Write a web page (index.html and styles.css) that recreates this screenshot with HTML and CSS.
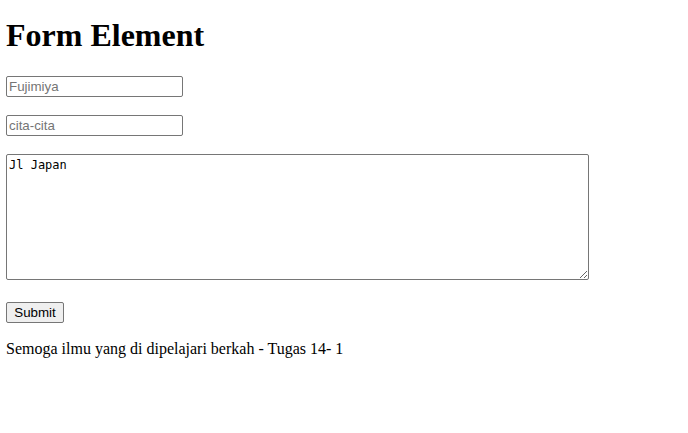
FILE: index.html
```html
<!DOCTYPE html>
<html>
<head>
<meta charset="utf-8">
<link rel="stylesheet" href="styles.css">
</head>
<body>
<h1 class="title">Form Element</h1>
<form class="form">
  <input class="field" type="text" placeholder="Fujimiya">
  <input class="field" type="text" placeholder="cita-cita">
  <textarea class="area">Jl Japan</textarea>
  <button class="submit" type="button">Submit</button>
</form>
<p class="note">Semoga ilmu yang di dipelajari berkah - Tugas 14- 1</p>
</body>
</html>
```
FILE: styles.css
```css
html, body {
  background: #fff;
}
body {
  margin: 0 6px;
  font-family: "Liberation Serif", "Times New Roman", serif;
  color: #000;
}
.title {
  margin: 17px 0 0;
  font-size: 32px;
  font-weight: bold;
  line-height: 37px;
  height: 37px;
}
.form {
  display: flex;
  flex-direction: column;
  align-items: flex-start;
  margin-top: 22px;
}
.field {
  box-sizing: border-box;
  width: 177px;
  height: 21px;
  margin: 0 0 18px;
  padding: 1px 2px;
  border: 1px solid #767676;
  border-radius: 2px;
  font-family: "Liberation Sans", Arial, sans-serif;
  font-size: 13.33px;
  color: #000;
  background: #fff;
}
.field::placeholder {
  color: #757575;
}
.area {
  box-sizing: border-box;
  width: 583px;
  height: 126px;
  margin: 0 0 22px;
  padding: 3px 2px 2px;
  border: 1px solid #767676;
  border-radius: 2px;
  font-family: "DejaVu Sans Mono", "Liberation Mono", monospace;
  font-size: 12px;
  line-height: 15px;
  color: #000;
  resize: both;
}
.submit {
  box-sizing: border-box;
  width: 58px;
  height: 21px;
  padding: 1px 6px;
  border: 1px solid #767676;
  border-radius: 2px;
  background: #efefef;
  font-family: "Liberation Sans", Arial, sans-serif;
  font-size: 13.33px;
  color: #000;
}
.note {
  margin: 17px 0 0;
  font-size: 16px;
  line-height: 18px;
}
```
